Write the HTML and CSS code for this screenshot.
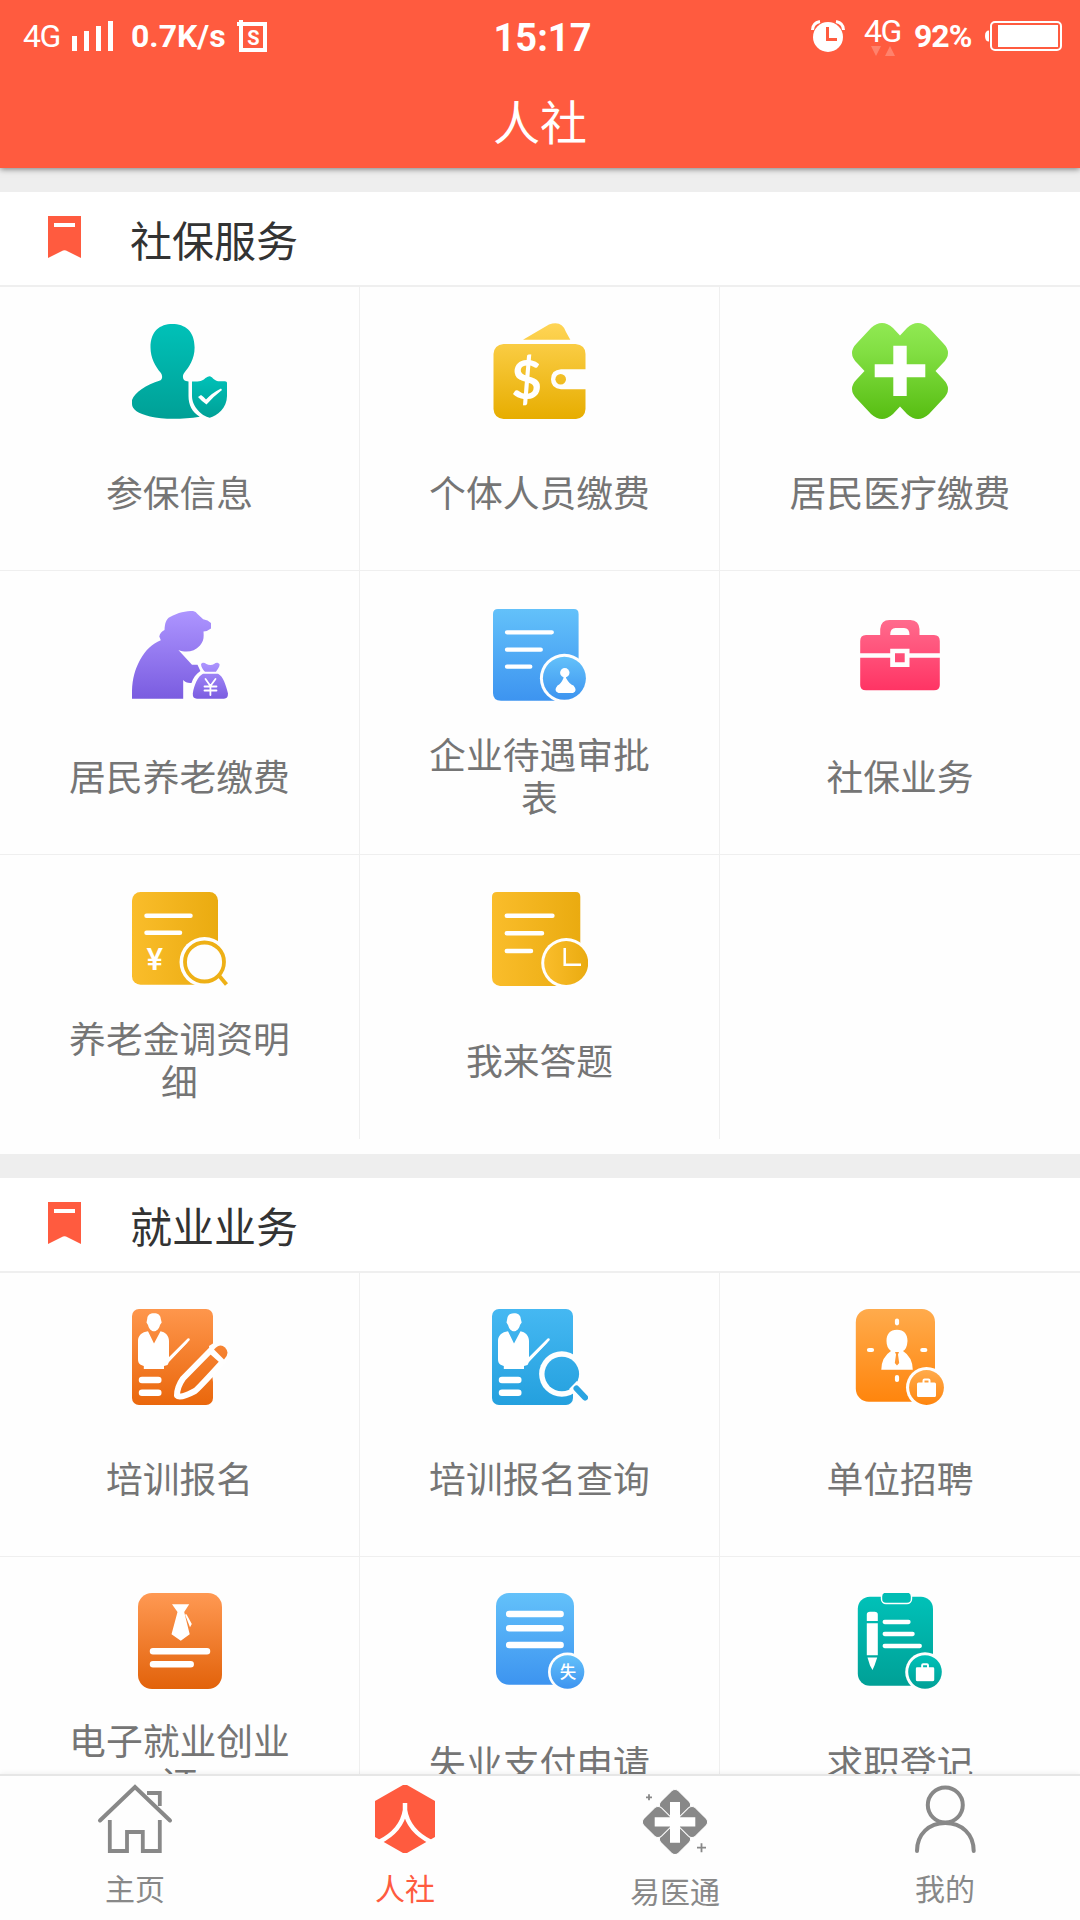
FILE: index.html
```html
<!DOCTYPE html>
<html lang="zh-CN">
<head>
<meta charset="utf-8">
<title>人社</title>
<link rel="stylesheet" href="styles.css">
</head>
<body>
<svg class="defs" width="0" height="0">
  <defs>
    <linearGradient id="teal" x1="0" y1="0" x2="0" y2="1"><stop offset="0" stop-color="#00c1b8"/><stop offset="1" stop-color="#00a096"/></linearGradient>
    <linearGradient id="gold" gradientUnits="userSpaceOnUse" x1="0" y1="0" x2="0" y2="96"><stop offset="0" stop-color="#ffd556"/><stop offset="1" stop-color="#e7ad00"/></linearGradient>
    <linearGradient id="green" x1="0" y1="0" x2="0" y2="1"><stop offset="0" stop-color="#90e953"/><stop offset=".3" stop-color="#82df43"/><stop offset="1" stop-color="#57bd12"/></linearGradient>
    <linearGradient id="purple" x1="0" y1="0" x2="0" y2="1"><stop offset="0" stop-color="#ad95ff"/><stop offset="1" stop-color="#7a5ce0"/></linearGradient>
    <linearGradient id="blue" x1="0" y1="0" x2="0" y2="1"><stop offset="0" stop-color="#63c1fa"/><stop offset="1" stop-color="#3d94f0"/></linearGradient>
    <linearGradient id="pink" gradientUnits="userSpaceOnUse" x1="0" y1="13" x2="0" y2="83"><stop offset="0" stop-color="#ff6b8d"/><stop offset="1" stop-color="#ff3464"/></linearGradient>
    <linearGradient id="amber" x1="0" y1="0" x2="1" y2="0"><stop offset="0" stop-color="#fabd2b"/><stop offset="1" stop-color="#eaab10"/></linearGradient>
    <linearGradient id="orange" gradientUnits="userSpaceOnUse" x1="0" y1="0" x2="0" y2="96"><stop offset="0" stop-color="#fe964c"/><stop offset="1" stop-color="#ea670c"/></linearGradient>
    <linearGradient id="sky" gradientUnits="userSpaceOnUse" x1="0" y1="0" x2="0" y2="96"><stop offset="0" stop-color="#45b8f2"/><stop offset="1" stop-color="#24a0de"/></linearGradient>
    <linearGradient id="tangerine" x1="0" y1="0" x2="0" y2="1"><stop offset="0" stop-color="#ffab4c"/><stop offset="1" stop-color="#ff850d"/></linearGradient>
    <linearGradient id="rust" x1="0" y1="0" x2="0" y2="1"><stop offset="0" stop-color="#ff9953"/><stop offset="1" stop-color="#e2620a"/></linearGradient>
    <symbol id="trainer" viewBox="0 0 96 96">
      <path fill="#fff" d="M22 4.3C26 4.3 28.500 6 28.800 10L29.700 13.500L28 16C27 20 24.500 22.300 22 22.300S17 20 16 16L14.500 13.500L15.200 10C15.500 6 18 4.300 22 4.300ZM16 22.300L22 34.500L28.500 22.300C33 23 37 26.500 37 32V49L57 30L55 34L37 53L35.500 56L32 57V60H11.800V57C8 56 6 54.500 6 50V32C6 26.500 10 23 16 22.300Z"/>
      <path stroke="#fff" stroke-width="2.500" stroke-linecap="round" d="M36 51L56.500 30.500"/>
      <path stroke="#fff" stroke-width="6.500" stroke-linecap="round" d="M10 71H26.300M10 83.700H26.300"/>
    </symbol>
    <symbol id="case" viewBox="0 0 20 20"><path fill="#fff" fill-rule="evenodd" d="M2 5H6V3Q6 1 8 1H12Q14 1 14 3V5H18Q19.500 5 19.500 6.500V18Q19.500 19.500 18 19.500H2Q.5 19.500 .5 18V6.500Q.5 5 2 5ZM8 5H12V3H8Z"/></symbol>
    <symbol id="flag" viewBox="0 0 33 42"><path fill="#ff5b3f" d="M0 0H33V42L18 34.500Q16.500 33.800 15 34.500L0 42Z"/><path fill="#fff" d="M6 7H27V11H6Z"/></symbol>
  </defs>
</svg>

<div class="app">
  <header class="appbar">
    <div class="status">
      <div class="status-left">
        <span class="net">4G</span>
        <svg class="bars" width="42" height="30" viewBox="0 0 42 30"><path fill="#fff" d="M0 15H5V30H0ZM12 10H17V30H12ZM24 5H29V30H24ZM36 0H41V30H36Z"/></svg>
        <span class="speed">0.7K/s</span>
        <svg class="app-badge" width="30" height="32" viewBox="0 0 30 32"><path fill="none" stroke="#fff" stroke-width="4" d="M4 4H28V30H4Z"/><path fill="#fff" d="M0 2H2V0H6V6H0Z"/><text x="16.500" y="24.500" text-anchor="middle" class="s-glyph">S</text></svg>
      </div>
      <div class="clock">15:17</div>
      <div class="status-right">
        <svg class="alarm" width="34" height="32" viewBox="0 0 34 32"><path fill="none" stroke="#fff" stroke-width="3" d="M1.500 10Q1.500 3 9 1.500M32.500 10Q32.500 3 25 1.500"/><circle cx="17" cy="17" r="15" fill="#fff"/><path fill="none" stroke="#ff5b3f" stroke-width="3" d="M16.500 7V19.500H26"/></svg>
        <div class="data"><span class="net">4G</span><svg width="24" height="10" viewBox="0 0 24 10"><path fill="#fff" opacity=".24" d="M0 0H10L5 10ZM14 10H24L19 0Z"/></svg></div>
        <span class="percent">92%</span>
        <svg class="battery" width="77" height="30" viewBox="0 0 77 30"><path fill="#fff" d="M4 9.500V20.500Q0 20.500 0 15T4 9.500Z"/><rect x="6" y="1" width="70" height="28" rx="4" fill="none" stroke="#fff" stroke-width="2"/><path fill="#fff" d="M13 4H73V26H13Z"/></svg>
      </div>
    </div>
    <h1 class="title">人社</h1>
  </header>

  <main class="content">
    <section class="section">
      <div class="section-head"><svg class="flag" width="33" height="42"><use href="#flag"/></svg><h2>社保服务</h2></div>
      <div class="grid">
        <div class="cell">
          <svg class="icon" viewBox="0 0 96 96"><path fill="url(#teal)" d="M40.300 1C53 1 62.600 8 62.600 24.500C62.600 36 57 44 52.500 49.500C50 52.500 50.500 57 54 58L56.500 58.500V73C56.500 82 60 89 67.700 93.700C50 96.500 31 96.500 18 93.500C6 90.500 0 86.500 0 81V77C3 69 14 62 28 57.500C31 56 30.500 52 28.500 49.500C23.500 43.500 18.500 35 18.500 24.500C18.500 8 28 1 40.300 1Z"/><path fill="url(#teal)" d="M77.700 53.300C80 53.300 81.500 57.500 86 58.200C91 58.700 95 57.500 95 60V73C95 85 85 93 77.700 94.700C70 93 60 84 60 73V58.500C69 59 71 57.500 73.500 55Q76 53.300 77.700 53.300Z"/><path fill="#fff" d="M66 74L69 72Q72 74 74 76.500Q80 70 89 65.500L90 67Q82 73 74.500 81.500Q70 78.500 66 74Z"/></svg>
          <div class="label">参保信息</div>
        </div>
        <div class="cell">
          <svg class="icon" viewBox="0 0 96 96"><path fill="url(#gold)" d="M31 16.700L57 1.500Q70-3 74 9L78.300 16.700ZM11.500 21H83.500Q93.500 22 93.500 31V46.300H69Q59 47 59 56.300T69 66.300H93.500V86Q93 95 84 96H11.500Q2 95 1.500 86V31Q2 22 11.500 21Z"/><circle cx="68.700" cy="56.300" r="5.300" fill="url(#gold)"/><text class="dollar" x="34.500" y="75.500" text-anchor="middle">$</text></svg>
          <div class="label">个体人员缴费</div>
        </div>
        <div class="cell">
          <svg class="icon" viewBox="0 0 96 96"><path fill="url(#green)" d="M48 12.500L55 5Q65.800-5 77 5L91 20Q101 30 91 40L83.500 48L91 56Q101 66 91 76L77 91Q66 101 55 91L48 83.500L41 91Q30 101 19 91L5 76Q-5 66 5 56L12.500 48L5 40Q-5 30 5 20L19 5Q30-5 41 5Z"/><path fill="#fff" d="M41.300 22.700H54.700V41.300H73.300V54.300H54.700V73H41.300V54.300H22.700V41.300H41.300Z"/></svg>
          <div class="label">居民医疗缴费</div>
        </div>

        <div class="cell">
          <svg class="icon" viewBox="0 0 96 96"><path fill="url(#purple)" d="M0 91.700C-.5 75 2 64 8 53C13.500 43 20 37 28.800 33.300L27.300 29.500Q28 25 32.500 23C33 16 34 12 38 10C46 5.500 54 4 61 4Q64 4.500 65.500 7L71.200 12.300Q76 13 79 16V21.500Q76 24 71.500 24.500C72 31 71.500 34 68 38.500C62 45 54 46 46.400 43L60 57.700H65.500L68.400 64C64 67 61 71 59.500 76Q54 76.500 51.200 73V91.700Z"/><path fill="url(#purple)" d="M69 57C72 53.500 74 58 78.400 58C82.500 58 84 53.500 87.500 57C88 60 85 63 84 64.700H73C71 63 69 60 69 57ZM71 66.700H86C91 69 94 78 96 86.500Q96 91.700 92 91.700H65Q60.500 91.700 60.800 86.500C62 78 66 69 71 66.700Z"/><path fill="none" stroke="#fff" stroke-width="1.800" stroke-linecap="round" d="M73.500 72L78.400 79L83.500 72M78.400 79V88M72.500 79.500H84.500M72.500 83.500H84.500"/></svg>
          <div class="label">居民养老缴费</div>
        </div>
        <div class="cell">
          <svg class="icon" viewBox="0 0 96 96"><path fill="url(#blue)" d="M6 2H82Q86.600 2 86.600 7V93.700H9Q1 93.700 1 86V7Q1 2 6 2Z"/><path fill="none" stroke="#fff" stroke-width="4.300" stroke-linecap="round" d="M15 25.300H59.800M15 42.700H48.800M15 59.700H38.300"/><path fill="#fefefe" d="M72.400 71.300L96 60V96H65Z"/><circle cx="72.400" cy="71.300" r="24.500" fill="#fefefe"/><circle cx="72.400" cy="71.300" r="21.500" fill="url(#blue)"/><circle cx="72.800" cy="65.700" r="4.700" fill="#fff"/><path fill="#fff" d="M71.500 69H74V71Q78 78 81.500 78.500Q86 84 81 86H66.500Q61 84 65.500 78.500Q69 77 71.500 71Z"/></svg>
          <div class="label">企业待遇审批表</div>
        </div>
        <div class="cell">
          <svg class="icon" viewBox="0 0 96 96"><path fill="url(#pink)" fill-rule="evenodd" d="M28.200 28V22Q29 13 37.500 13H58.500Q67 13.500 67.500 22V28H82Q87.800 28 87.800 34V46.300H57.500V41.700H38.200V46.300H8.200V34Q8.200 28 14 28ZM38.200 28H57.500Q57.500 21 52 21H43.500Q38.200 21 38.200 28ZM8.200 50.700H38.200V60H57.500V50.700H87.800V78Q87.800 83.300 82 83.300H14Q8.200 83.300 8.200 78ZM43 46.300H52.700V55.300H43Z"/></svg>
          <div class="label">社保业务</div>
        </div>

        <div class="cell">
          <svg class="icon" viewBox="0 0 96 96"><rect y="1" width="86" height="92.700" rx="8.500" fill="url(#amber)"/><path fill="none" stroke="#fff" stroke-width="4.500" stroke-linecap="round" d="M14.500 24.700H58.500M14.500 41.700H48"/><text class="yen" x="22.800" y="79" text-anchor="middle">¥</text><circle cx="72.500" cy="71" r="25" fill="#fefefe"/><path stroke="#eeb016" stroke-width="4" d="M86.500 84L94.500 93.500"/><circle cx="72.500" cy="71" r="19.500" fill="#fefefe" stroke="#eeb016" stroke-width="3.800"/></svg>
          <div class="label">养老金调资明细</div>
        </div>
        <div class="cell">
          <svg class="icon" viewBox="0 0 96 96"><path fill="url(#amber)" d="M5 1H84Q88.300 1 88.300 6V95H8Q0 94 0 86V6Q0 1 5 1Z"/><path fill="none" stroke="#fff" stroke-width="4.500" stroke-linecap="round" d="M14.800 24.700H60.400M14.800 42.300H50M14.800 60H39"/><path fill="#fefefe" d="M64 96L96 60V96Z"/><circle cx="74.200" cy="72" r="25" fill="#fefefe"/><circle cx="74.200" cy="72" r="22" fill="url(#amber)"/><path fill="none" stroke="#fff" stroke-width="2.500" d="M72.700 57V73.700H89"/></svg>
          <div class="label">我来答题</div>
        </div>
        <div class="cell"></div>
      </div>
    </section>

    <section class="section">
      <div class="section-head"><svg class="flag" width="33" height="42"><use href="#flag"/></svg><h2>就业业务</h2></div>
      <div class="grid">
        <div class="cell">
          <svg class="icon" viewBox="0 0 96 96"><rect width="81" height="96" rx="7" fill="url(#orange)"/><use href="#trainer"/><path fill="#fefefe" d="M77 37L88 30L96 36V60L81 73Z"/><path fill="url(#orange)" stroke="#fff" stroke-width="6" stroke-linejoin="round" d="M78.500 41.500L51 69.500Q45 78 45 86.500Q48 90 63 82Q66 80 91 52.500Z"/><path fill="url(#orange)" d="M82 40.500Q88 33.500 93 38.500Q98.500 44 92 50.500Z"/></svg>
          <div class="label">培训报名</div>
        </div>
        <div class="cell">
          <svg class="icon" viewBox="0 0 96 96"><rect width="81" height="96" rx="7" fill="url(#sky)"/><use href="#trainer"/><circle cx="69.800" cy="65" r="22.700" fill="#fefefe"/><circle cx="69.800" cy="65" r="17.300" fill="url(#sky)"/><path stroke="#fefefe" stroke-width="11" d="M81 76L84 79"/><path stroke="#2aa4e1" stroke-width="6" stroke-linecap="round" d="M84.500 79.500L93 88.500"/></svg>
          <div class="label">培训报名查询</div>
        </div>
        <div class="cell">
          <svg class="icon" viewBox="0 0 96 96"><rect x="3.800" width="79.200" height="92.700" rx="13" fill="url(#tangerine)"/><path stroke="#fff" stroke-width="4.200" stroke-linecap="round" d="M45 11.500V14.300M45 68V71M17 41H20M70.300 41H73.300"/><path fill="#fff" d="M45 20.700C52 20.700 55.500 25 55.500 32Q55 40 51 42Q60.500 48 60.800 60.700H29.300Q29.500 48 39 42Q34.500 39 34.500 32C34.500 25 38 20.700 45 20.700Z"/><path fill="#ff9934" d="M43 43H47L46 45.500L47.200 54L45 56.500L42.800 54L44 45.500Z"/><circle cx="74.500" cy="78.500" r="20.500" fill="#fefefe"/><circle cx="74.500" cy="78.500" r="17.400" fill="url(#tangerine)"/><use href="#case" x="64.500" y="68.500" width="20" height="20"/></svg>
          <div class="label">单位招聘</div>
        </div>

        <div class="cell">
          <svg class="icon" viewBox="0 0 96 96"><rect x="6" width="84" height="96" rx="14" fill="url(#rust)"/><path fill="#fff" d="M40 11.300H57.200L52.200 19L57.700 41.300L48.800 47.700L39.500 41.300L45.500 19ZM53 21.500L54.500 21.300L59.800 31L58 34.200Z"/><path stroke="#fff" stroke-width="6.500" stroke-linecap="round" d="M21 58.300H75M21 71.300H58.700"/></svg>
          <div class="label">电子就业创业证</div>
        </div>
        <div class="cell">
          <svg class="icon" viewBox="0 0 96 96"><rect x="4" width="78" height="91.700" rx="13" fill="url(#blue)"/><path stroke="#fff" stroke-width="6.500" stroke-linecap="round" d="M17.200 21H68.600M17.200 35.300H68.600M17.200 52H68.600"/><circle cx="75.500" cy="79" r="19.500" fill="#fefefe"/><circle cx="75.500" cy="79" r="16.800" fill="url(#blue)"/><text class="mini" x="76" y="85" text-anchor="middle">失</text></svg>
          <div class="label">失业支付申请</div>
        </div>
        <div class="cell">
          <svg class="icon" viewBox="0 0 96 96"><rect x="5.800" y="3.700" width="75.200" height="89" rx="12" fill="url(#teal)"/><rect x="29.500" y="-1" width="30" height="11.500" rx="4.500" fill="#00bdb4" stroke="#fff" stroke-width="1.400"/><path fill="#fff" d="M14.800 28V21.500Q14.800 18.700 18 18.700H22.600Q25.800 18.700 25.800 21.500V28ZM14.800 30.300H25.800V62.300H14.800ZM15.500 64.500H25.200L22.500 72.500L20.500 77L18 72.500Z"/><path stroke="#fff" stroke-width="4.300" stroke-linecap="round" d="M32.700 29H56.500M32.700 41H60.600M32.700 53H67.800"/><circle cx="73" cy="79" r="19.800" fill="#fefefe"/><circle cx="73" cy="79" r="16.800" fill="url(#teal)"/><use href="#case" x="63.300" y="69.300" width="19.500" height="19.500"/></svg>
          <div class="label">求职登记</div>
        </div>
      </div>
    </section>
  </main>

  <nav class="tabs">
    <a class="tab"><svg class="tab-icon" viewBox="0 0 80 72"><path fill="none" stroke="#888" stroke-width="4" stroke-linecap="round" d="M5 37.500L40 4L75 37.500"/><path fill="none" stroke="#888" stroke-width="3.800" d="M52 10H64.800V23M14.800 37V68H32V49H47.800V68H64.800V37"/></svg><span>主页</span></a>
    <a class="tab active"><svg class="tab-icon" viewBox="0 0 80 72"><path fill="#ff5b3f" d="M38 2H42L70 18V54L42 70H38L10 54V18Z"/><path fill="none" stroke="#fff" stroke-width="4.500" d="M40 20V27C38 40 30 51 14 59M40 27C42 40 50 51 66 59"/></svg><span>人社</span></a>
    <a class="tab lower"><svg class="tab-icon" viewBox="0 0 80 72"><g fill="#888" stroke="#fefefe" stroke-width="1"><rect x="27.500" y="9.500" width="25" height="25" rx="5" transform="rotate(45 40 22)"/><rect x="27.500" y="43.500" width="25" height="25" rx="5" transform="rotate(45 40 56)"/><rect x="10.500" y="26.500" width="25" height="25" rx="5" transform="rotate(45 23 39)"/><rect x="44.500" y="26.500" width="25" height="25" rx="5" transform="rotate(45 57 39)"/></g><path fill="#fff" d="M35 19H45V34.300H60.300V43.500H45V59.700H35V43.500H19.700V34.300H35Z"/><path stroke="#888" stroke-width="1.800" d="M11 14.300H17M14 11.300V17.300M62 64.700H71M66.500 60.200V69.200"/></svg><span>易医通</span></a>
    <a class="tab"><svg class="tab-icon" viewBox="0 0 80 72"><circle cx="40.300" cy="22" r="17.500" fill="none" stroke="#888" stroke-width="4"/><path fill="none" stroke="#888" stroke-width="4" stroke-linecap="round" d="M12 68C12 51 24 40 40.300 40S68.700 51 68.700 68"/></svg><span>我的</span></a>
  </nav>
</div>
</body>
</html>
```
FILE: styles.css
```css
* { box-sizing: border-box; }
body { margin: 0; font-family: "Noto Sans CJK SC", sans-serif; }
.defs { position: absolute; }
.app { width: 1080px; height: 1920px; display: flex; flex-direction: column; overflow: hidden; background: #eee; }

.appbar { flex: none; height: 168px; background: #ff5b3f; color: #fff; box-shadow: 0 1px 6px rgba(0, 0, 0, .5); z-index: 1; }
.status { height: 72px; display: grid; grid-template-columns: 1fr auto 1fr; font-family: Roboto, sans-serif; line-height: 32px; padding: 20px 18px 0 23px; }
.status-left, .status-right { display: flex; align-items: flex-start; height: 32px; }
.status-right { justify-content: flex-end; }
.net { font-size: 32px; letter-spacing: -1.5px; line-height: 32px; width: 38px; }
.bars { margin: 1px 0 0 11px; }
.speed { width: 98px; margin-left: 17px; font-size: 32px; font-weight: 700; }
.status-left .net, .speed, .percent { position: relative; }
.status-left .net { padding-top: 0; }
.app-badge { margin-left: 8px; }
.s-glyph { font: 700 20px Roboto, sans-serif; fill: #fff; }
.clock { font-size: 38px; font-weight: 700; line-height: 36px; }
.data { width: 38px; display: flex; flex-direction: column; align-items: center; margin: -5px 0 0 19px; }
.data svg { margin-top: -1px; }
.percent { margin: 0 9px 0 12px; width: 62px; font-size: 32px; font-weight: 700; letter-spacing: -1px; white-space: nowrap; }
.battery { margin-top: 1px; }
.title { margin: 0; height: 96px; line-height: 96px; text-align: center; font-size: 47px; font-weight: 400; }

.content { flex: 1; min-height: 0; overflow: hidden; padding-top: 24px; }
.section { background: #fefefe; margin-bottom: 24px; padding-bottom: 15px; }
.section-head { height: 95px; border-bottom: 2px solid #efefef; background: #fff; display: flex; align-items: center; padding-left: 48px; }
.flag { flex: none; margin-bottom: 3px; }
.section-head h2 { margin: 0 0 0 49px; font-size: 42px; line-height: 60px; font-weight: 400; color: #333; }
.grid { display: grid; grid-template-columns: repeat(3, 360px); grid-auto-rows: 284px; }
.cell { display: flex; flex-direction: column; align-items: center; padding-top: 36px; border-right: 1px solid #efefef; border-bottom: 1px solid #efefef; }
.cell:nth-child(3n) { border-right: 0; }
.cell:nth-child(n+7) { border-bottom: 0; }
.icon { flex: none; width: 96px; height: 96px; overflow: hidden; }
.label { width: 224px; height: 90px; margin-top: 27px; display: flex; align-items: center; justify-content: center; text-align: center; font-size: 36.800px; line-height: 43px; color: #757575; word-break: break-all; }
.dollar { font: 700 53px Lato, sans-serif; fill: #fff; }
.yen { font: 500 31px Roboto, sans-serif; fill: #fff; }
.mini { font: 500 16.500px "Noto Sans CJK SC", sans-serif; fill: #fff; }

.tabs { flex: none; height: 146px; display: grid; grid-template-columns: repeat(4, 1fr); background: #fefefe; border-top: 2px solid #e6e6e6; box-shadow: 0 0 6px rgba(0, 0, 0, .08); z-index: 1; }
.tab { display: flex; flex-direction: column; align-items: center; padding-top: 7px; font-size: 30px; line-height: 36px; color: #888; }
.tab-icon { width: 80px; height: 72px; }
.tab span { margin-top: 14px; }
.tab.lower span { margin-top: 17px; }
.tab.active { color: #ff5b3f; }
```
